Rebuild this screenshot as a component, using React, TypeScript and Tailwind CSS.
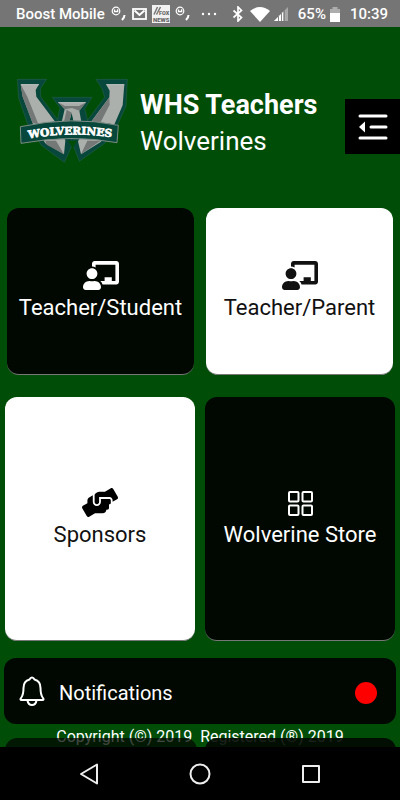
import type { ReactNode } from 'react';
import { FaChalkboardTeacher, FaHandsHelping } from 'react-icons/fa';

interface TileProps {
    label: string;
    icon: ReactNode;
    dark?: boolean;
    className?: string;
}

function Tile({ label, icon, dark, className = '' }: TileProps) {
    return (
        <button
            type="button"
            className={`flex flex-col items-center justify-center gap-0.5 rounded-xl border-b border-[#777] pt-0.5 text-[22px] leading-8 whitespace-nowrap ${
                dark ? 'bg-[#010801] text-white' : 'bg-white text-[#111]'
            } ${className}`}
        >
            {icon}
            <span>{label}</span>
        </button>
    );
}

function HistoryGlyph() {
    return (
        <svg className="h-4 w-4" viewBox="0 0 16 16" fill="none" stroke="currentColor" aria-hidden="true">
            <circle cx="5" cy="5" r="3.8" strokeWidth="1.2" />
            <path d="M3.500 3.500v2h3.200V3.200" strokeWidth="1.3" />
            <path d="M13.500 9c0 2-1 3.500-2.500 5" strokeWidth="2" />
        </svg>
    );
}

function StatusBar() {
    return (
        <div className="flex h-[27px] shrink-0 items-center bg-[#757575] pt-px pr-3 pl-4 text-[15px] font-medium whitespace-nowrap text-white">
            <span>Boost Mobile</span>
            <div className="ml-1.5 flex items-center gap-[5px]">
                <HistoryGlyph />
                <svg className="h-3 w-[15px]" viewBox="0 0 15 12" fill="none" stroke="currentColor" strokeWidth="1.8" aria-hidden="true">
                    <rect x="1" y="1" width="13" height="10" />
                    <path d="m2.500 2.500 5 4.500 5-4.500" strokeWidth="2" />
                </svg>
                <svg className="h-[18px] w-[18px]" viewBox="0 0 36 36" aria-hidden="true">
                    <rect width="36" height="36" fill="#f1f1f1" />
                    <path d="M4 19 11 4M9 19 17 4" stroke="#777" strokeWidth="3" />
                    <text x="14" y="19" fontFamily="Roboto, sans-serif" fontSize="11" fontWeight="900" fill="#666">FOX</text>
                    <text x="2" y="33" fontFamily="Roboto, sans-serif" fontSize="12" fontWeight="900" fill="#666">NEWS</text>
                </svg>
                <HistoryGlyph />
            </div>
            <svg className="ml-2.5 h-1 w-4" viewBox="0 0 16 4" fill="currentColor" aria-hidden="true">
                <circle cx="2" cy="2" r="1.2" />
                <circle cx="8" cy="2" r="1.2" />
                <circle cx="14" cy="2" r="1.2" />
            </svg>
            <div className="ml-auto flex items-center">
                <svg className="h-4 w-3" viewBox="0 0 12 16" fill="none" stroke="currentColor" strokeWidth="1.7" aria-hidden="true">
                    <path d="m1.500 4.500 8 7L6 15V1l3.500 3.500-8 7" />
                </svg>
                <svg className="ml-1.5 h-[15px] w-5" viewBox="0 0 20 15" fill="currentColor" aria-hidden="true">
                    <path d="M0 4Q10-4 20 4L10 15Z" />
                </svg>
                <svg className="ml-1 h-3.5 w-3.5" viewBox="0 0 14 14" aria-hidden="true">
                    <path d="M0 14 14 0v14Z" fill="#a8a8a8" />
                    <path d="M0 14 9 5v9Z" fill="#fff" />
                    <path d="M4.500 8v6M7.500 5v9M10.500 3v11" stroke="#858585" />
                </svg>
                <span className="ml-2.5">65%</span>
                <svg className="ml-1 h-[15px] w-2.5" viewBox="0 0 10 15" aria-hidden="true">
                    <path d="M0 2h2.500V0h5v2H10v4H0Z" fill="#adadad" />
                    <path d="M0 6h10v9H0Z" fill="#fff" />
                </svg>
                <span className="ml-2.5">10:39</span>
            </div>
        </div>
    );
}

function Logo() {
    return (
        <svg className="h-[95px] w-[125px] shrink-0" viewBox="0 0 375 285" role="img" aria-label="Wolverines">
            {/* outlines */}
            <g fill="#08483c" stroke="#3d7064" strokeWidth="1">
                <path d="M127 82H246L224 116 240 178 188 225 136 178 150 113Z" />
                <path d="M22 28H110L92 55V80L180 200 188 222 163 277 94 226 52 160 26 84Z" />
                <path d="M258 28H352L348 108 322 166 284 220 208 274 188 222 196 200 284 82 276 56Z" />
            </g>
            <path d="M174 212h28l-14 22Z" fill="#004d08" />

            {/* centre stroke */}
            <path d="M144 97H228L208 122 218 178H194L185 128 172 178H150L164 118Z" fill="#a9adaa" />
            <path d="M185 128 172 178H157L170 119ZM144 97l21 11h42l21-11-20 25-22-8-22 4Z" fill="#747876" />
            <path d="M185 135 174 180H198Z" fill="#08483c" />

            {/* left stroke */}
            <path d="M32 43H87L77 60 79 80 154 180 166 212 162 253 106 220 68 160 38 80Z" fill="#abb0ad" />
            <path d="M32 43 52 80 84 160 68 160 38 80ZM106 212H138L162 253 110 224Z" fill="#747876" />

            {/* right stroke */}
            <path d="M288 43H343L338 106 312 166 272 216 213 253 204 214 222 184 298 82 299 62Z" fill="#abb0ad" />
            <path d="M298 82 299 104 266 168 226 180ZM272 212 213 253 232 212Z" fill="#747876" />
            <path d="M33 44H87M289 44h54M145 98h82" stroke="#d4d7d4" strokeWidth="2" />

            <path d="M31 170Q187 137 325 166L321 218Q187 192 33 220Z" fill="#08483c" stroke="#7c8c84" strokeWidth="3" />
            <path id="banner-line" d="M56 206Q187 181 335 206" fill="none" />
            <text fontFamily="'DejaVu Serif', serif" fontSize="32" fontWeight="700" fill="#fff" stroke="#fff" strokeWidth="2">
                <textPath href="#banner-line">WOLVERINES</textPath>
            </text>
        </svg>
    );
}

function Header() {
    return (
        <header className="flex items-center pt-[43px] pb-[43px] pl-2.5">
            <Logo />
            <div className="mt-2.5 ml-[5px] whitespace-nowrap">
                <h1 className="text-[27px] leading-9 font-bold">WHS Teachers</h1>
                <p className="text-[26px] leading-9">Wolverines</p>
            </div>
            <button type="button" aria-label="Open menu" className="mt-[18px] ml-auto flex h-[55px] w-[55px] shrink-0 items-center justify-center bg-black">
                <svg className="h-[28px] w-[30px]" viewBox="0 0 30 28" fill="none" stroke="currentColor" strokeWidth="3" strokeLinecap="round">
                    <path d="M2 3h26M13 14h15M2 25h26" />
                    <path d="m1 14 6-5.500v11Z" fill="currentColor" stroke="none" />
                </svg>
            </button>
        </header>
    );
}

export default function App() {
    return (
        <div className="flex h-screen flex-col overflow-hidden bg-[#004d08] font-[Roboto,sans-serif] text-white">
            <StatusBar />

            <main className="min-h-0 flex-1 overflow-hidden">
                <Header />

                <div className="grid grid-cols-2 gap-3 px-[7px]">
                    <Tile
                        dark
                        label="Teacher/Student"
                        className="h-[167px]"
                        icon={<FaChalkboardTeacher className="h-[29px] w-9" />}
                    />
                    <Tile
                        label="Teacher/Parent"
                        className="h-[167px]"
                        icon={<FaChalkboardTeacher className="h-[29px] w-9" />}
                    />
                </div>

                <div className="mt-[22px] grid grid-cols-2 gap-2.5 px-[5px]">
                    <Tile
                        label="Sponsors"
                        className="h-[244px]"
                        icon={<FaHandsHelping className="h-[29px] w-9 text-black" />}
                    />
                    <Tile
                        dark
                        label="Wolverine Store"
                        className="h-[244px]"
                        icon={
                            <svg className="mt-0.5 h-[27px] w-[27px]" viewBox="0 0 27 27" fill="none" stroke="currentColor" strokeWidth="2">
                                <rect x="2" y="2" width="9.500" height="9.500" rx="1" />
                                <rect x="15.500" y="2" width="9.500" height="9.500" rx="1" />
                                <rect x="2" y="15.500" width="9.500" height="9.500" rx="1" />
                                <rect x="15.500" y="15.500" width="9.500" height="9.500" rx="1" />
                            </svg>
                        }
                    />
                </div>

                <button type="button" className="mx-1 mt-[17px] flex h-[66px] w-[calc(100%-8px)] items-center rounded-xl bg-[#010801] pt-1 pr-[19px] pl-[15px] text-xl">
                    <svg className="mb-1 h-[30px] w-[26px]" viewBox="0 0 26 30" fill="none" stroke="currentColor" strokeWidth="2" strokeLinejoin="round" aria-hidden="true">
                        <path d="M13 1.500c-1.500 0-2 1-2.500 2C6.500 4.500 4.500 8 4.500 12c0 7-1 8-2.500 10-1 1.500-.5 2 .5 2h21c1 0 1.500-.5.5-2-1.500-2-2.500-3-2.500-10 0-4-2-7.500-6-8.500-.5-1-1-2-2.500-2Z" />
                        <path d="M8.500 24.500c.5 3 2.500 4.500 4.500 4.500s4-1.500 4.500-4.500" />
                    </svg>
                    <span className="ml-3.5">Notifications</span>
                    <span className="ml-auto h-[22px] w-[22px] rounded-full bg-[#ff0000]" />
                </button>

                <p className="mt-px text-center text-base whitespace-pre">Copyright (©) 2019  Registered (®) 2019</p>

                {/* next row of tiles slides over the copyright line */}
                <div className="relative -mt-[11px] grid grid-cols-2 gap-2 pr-1 pl-[5px]">
                    <div className="h-40 rounded-xl bg-[#010801]/75" />
                    <div className="h-40 rounded-xl bg-[#010801]/90" />
                </div>
            </main>

            <nav className="grid h-[53px] shrink-0 grid-cols-[1fr_22px_1fr] items-center bg-black text-[#eee]">
                <button type="button" aria-label="Back" className="mr-[90px] justify-self-end">
                    <svg className="h-[22px] w-5" viewBox="0 0 20 22" fill="none" stroke="currentColor" strokeWidth="2" strokeLinejoin="round">
                        <path d="M18 1.500v19L2 11Z" />
                    </svg>
                </button>
                <button type="button" aria-label="Home">
                    <svg className="h-[22px] w-[22px]" viewBox="0 0 22 22" fill="none" stroke="currentColor" strokeWidth="2">
                        <circle cx="11" cy="11" r="9.500" />
                    </svg>
                </button>
                <button type="button" aria-label="Recent apps" className="ml-[90px] justify-self-start">
                    <svg className="h-5 w-5" viewBox="0 0 20 20" fill="none" stroke="currentColor" strokeWidth="2" strokeLinejoin="round">
                        <rect x="2" y="2" width="16" height="16" />
                    </svg>
                </button>
            </nav>
        </div>
    );
}
